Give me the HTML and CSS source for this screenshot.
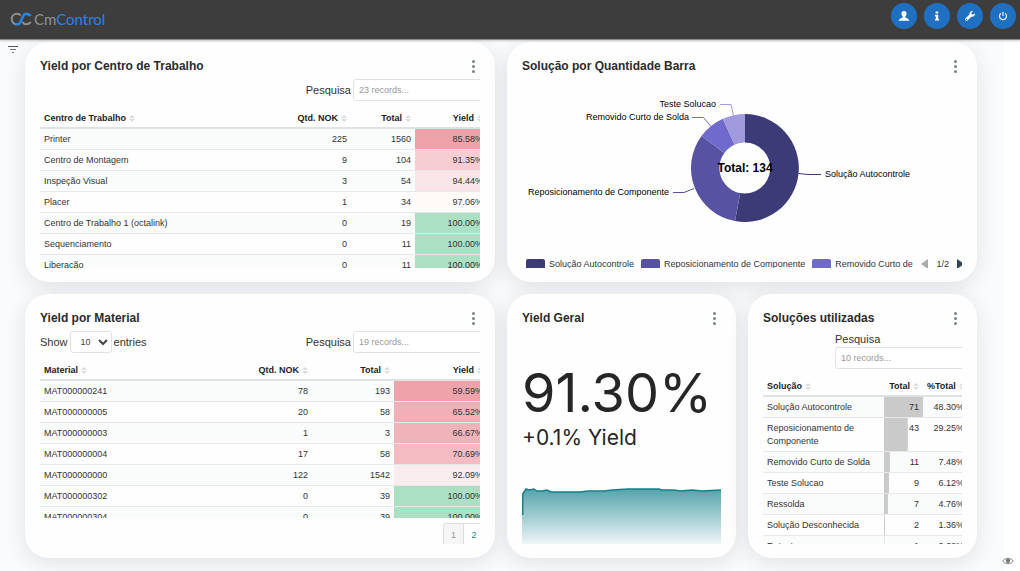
FILE: index.html
```html
<!DOCTYPE html>
<html lang="pt-BR">
<head>
  <meta charset="UTF-8">
  <meta name="viewport" content="width=device-width, initial-scale=1">
  <title>CmControl</title>
  <link rel="stylesheet" href="styles.css">
</head>
<body>
  <header class="topbar">
    <a class="logo" href="#" aria-label="CmControl">
      <svg width="23" height="14" viewBox="0 0 23 14" fill="none" stroke-width="2">
        <path d="M10.500 3.500C9.500 2 8.300 1.700 7 1.700C4 1.700 1.700 4 1.700 7S4 12.300 6.500 12.300" stroke="#8f8f8f"/>
        <path d="M5 12.300H8C12 12.300 11.500 1.700 16 1.700C18 1.700 19.500 2.500 20.500 4" stroke="#2b84e0" stroke-width="2.600"/>
        <path d="M12.500 10C13.500 11.700 14.700 12.300 16 12.300C18 12.300 19.500 11.500 20.800 10" stroke="#8f8f8f"/>
      </svg>
      <span class="logo-text">Cm<b>Control</b></span>
    </a>
    <nav class="actions">
      <button class="round" aria-label="Usuário">
        <svg width="12" height="12" viewBox="0 0 12 12"><path fill="#fff" d="M6 1C7.700 1 8.500 2.100 8.500 3.600C8.500 5 8 6 7.300 6.500V7.600C8.500 8.300 11 8.700 11.300 10.800H.7C1 8.700 3.500 8.300 4.700 7.600V6.500C4 6 3.500 5 3.500 3.600C3.500 2.100 4.300 1 6 1Z"/></svg>
      </button>
      <button class="round" aria-label="Informações">
        <svg width="12" height="12" viewBox="0 0 12 12"><path fill="#fff" d="M4.600 1.500h2.600v2H4.600zM3.900 4.800h3.300v4.400h1v1.400H3.900V9.200h.9V6.200h-.9z"/></svg>
      </button>
      <button class="round" aria-label="Configurações">
        <svg width="12" height="12" viewBox="0 0 12 12"><path fill="#fff" d="M10.900 3.300L9 4.700L7.500 3.900L7.400 2.400L9.300 1.200C7.400.5 5.200 1.900 5.500 4.600L1.400 8.500C.4 9.600 2.200 11.600 3.500 10.600L7.300 6.800C9.800 7.100 11.500 5.200 10.900 3.300ZM2.500 10.100a.7.700 0 1 1 .1-1.400a.7.700 0 0 1-.1 1.400Z"/></svg>
      </button>
      <button class="round" aria-label="Sair">
        <svg width="12" height="12" viewBox="0 0 12 12" fill="none" stroke="#dbe9f7" stroke-width="1.300"><path d="M3.900 3.300A3.500 3.500 0 1 0 8.100 3.300M6 1.700V6"/></svg>
      </button>
    </nav>
  </header>

  <main class="page">
    <button class="filter" aria-label="Filtros">
      <svg width="12" height="10" viewBox="0 0 12 10" stroke="#777" fill="none"><path d="M1 1.500H11" stroke="#555"/><path d="M3 4.500H9M5 7.500H7"/></svg>
    </button>

    <div class="grid">
      <section class="card wide">
        <div class="card-head">
          <h2>Yield por Centro de Trabalho</h2>
          <button class="kebab" aria-label="Menu"><i></i><i></i><i></i></button>
        </div>
        <div class="card-body">
          <div class="controls">
            <label class="search">Pesquisa <input type="search" placeholder="23 records..."></label>
          </div>
          <div class="scroll">
            <table class="by-center">
              <colgroup><col><col class="c-nok"><col class="c-total"><col class="c-yield"></colgroup>
              <thead>
                <tr><th>Centro de Trabalho<s></s></th><th>Qtd. NOK<s></s></th><th>Total<s></s></th><th>Yield<s></s></th></tr>
              </thead>
              <tbody>
                <tr><td>Printer</td><td>225</td><td>1560</td><td style="background:#eea2aa">85.58%</td></tr>
                <tr><td>Centro de Montagem</td><td>9</td><td>104</td><td style="background:#f6cdd2">91.35%</td></tr>
                <tr><td>Inspeção Visual</td><td>3</td><td>54</td><td style="background:#f9e4e7">94.44%</td></tr>
                <tr><td>Placer</td><td>1</td><td>34</td><td style="background:#fdfaf7">97.06%</td></tr>
                <tr><td>Centro de Trabalho 1 (octalink)</td><td>0</td><td>19</td><td style="background:#abe0c5">100.00%</td></tr>
                <tr><td>Sequenciamento</td><td>0</td><td>11</td><td style="background:#abe0c5">100.00%</td></tr>
                <tr><td>Liberação</td><td>0</td><td>11</td><td style="background:#abe0c5">100.00%</td></tr>
              </tbody>
            </table>
          </div>
        </div>
      </section>

      <section class="card wide">
        <div class="card-head">
          <h2>Solução por Quantidade Barra</h2>
          <button class="kebab" aria-label="Menu"><i></i><i></i><i></i></button>
        </div>
        <div class="card-body">
          <svg class="donut" viewBox="0 0 440 180">
            <path fill="#3c3a77" d="M223 39A54 54 0 1 1 213 146.100L218.300 118.100A25.500 25.500 0 1 0 223 67.500Z"/>
            <path fill="#5752a2" d="M213 146.100A54 54 0 0 1 179.500 61L202.400 77.900A25.500 25.500 0 0 0 218.300 118.100Z"/>
            <path fill="#716acd" d="M179.500 61A54 54 0 0 1 200.900 43.700L212.500 69.700A25.500 25.500 0 0 0 202.400 77.900Z"/>
            <path fill="#9f9bdc" d="M200.900 43.700A54 54 0 0 1 223 39V67.500A25.500 25.500 0 0 0 212.500 69.700Z"/>
            <g fill="none">
              <path stroke="#9f9bdc" d="M198 29.500H209L211.500 40.500"/>
              <path stroke="#716acd" d="M170 42.500H181.500L189 51.500"/>
              <path stroke="#5752a2" d="M151 117.500H162L172 113.500"/>
              <path stroke="#3c3a77" d="M276.500 98.500L286 99.500H299"/>
            </g>
            <text x="194" y="32" text-anchor="end">Teste Solucao</text>
            <text x="167" y="45" text-anchor="end">Removido Curto de Solda</text>
            <text x="147" y="120" text-anchor="end">Reposicionamento de Componente</text>
            <text x="303" y="102">Solução Autocontrole</text>
            <text class="donut-total" x="223" y="97" text-anchor="middle">Total: 134</text>
          </svg>
          <div class="legend">
            <ul>
              <li><i class="l1"></i>Solução Autocontrole</li>
              <li><i class="l2"></i>Reposicionamento de Componente</li>
              <li><i class="l3"></i>Removido Curto de</li>
            </ul>
            <div class="legend-pager">
              <button class="prev" aria-label="Anterior"></button>
              <span>1/2</span>
              <button class="next" aria-label="Próximo"></button>
            </div>
          </div>
        </div>
      </section>

      <section class="card wide">
        <div class="card-head">
          <h2>Yield por Material</h2>
          <button class="kebab" aria-label="Menu"><i></i><i></i><i></i></button>
        </div>
        <div class="card-body">
          <div class="controls">
            <label class="show">Show <select><option>10</option><option>25</option><option>50</option></select> entries</label>
            <label class="search">Pesquisa <input type="search" placeholder="19 records..."></label>
          </div>
          <div class="scroll">
            <table class="by-material">
              <colgroup><col><col class="c-nok"><col class="c-total"><col class="c-yield"></colgroup>
              <thead>
                <tr><th>Material<s></s></th><th>Qtd. NOK<s></s></th><th>Total<s></s></th><th>Yield<s></s></th></tr>
              </thead>
              <tbody>
                <tr><td>MAT000000241</td><td>78</td><td>193</td><td style="background:#eea2aa">59.59%</td></tr>
                <tr><td>MAT000000005</td><td>20</td><td>58</td><td style="background:#f1b0b7">65.52%</td></tr>
                <tr><td>MAT000000003</td><td>1</td><td>3</td><td style="background:#f1b3ba">66.67%</td></tr>
                <tr><td>MAT000000004</td><td>17</td><td>58</td><td style="background:#f4bcc2">70.69%</td></tr>
                <tr><td>MAT000000000</td><td>122</td><td>1542</td><td style="background:#f9ecee">92.09%</td></tr>
                <tr><td>MAT000000302</td><td>0</td><td>39</td><td style="background:#abe0c5">100.00%</td></tr>
                <tr><td>MAT000000304</td><td>0</td><td>39</td><td style="background:#abe0c5">100.00%</td></tr>
              </tbody>
            </table>
          </div>
          <div class="pages">
            <button disabled>1</button><button>2</button>
          </div>
        </div>
      </section>

      <section class="card">
        <div class="card-head">
          <h2>Yield Geral</h2>
          <button class="kebab" aria-label="Menu"><i></i><i></i><i></i></button>
        </div>
        <div class="card-body kpi">
          <p class="kpi-value">91.30%</p>
          <p class="kpi-delta">+0.1% Yield</p>
          <svg class="area" viewBox="0 0 199 57" preserveAspectRatio="none">
            <defs>
              <linearGradient id="fade" x1="0" y1="0" x2="0" y2="1">
                <stop offset="0" stop-color="#55a3ab"/>
                <stop offset="1" stop-color="#eef6f7"/>
              </linearGradient>
            </defs>
            <path fill="url(#fade)" d="M0 57V7L2 5L4 2L7 3L12 2L15 4L20 4L25 3L29 5H58L66 4H82L90 3L106 2H137L140 3H152L158 4L170 3L180 4L199 3V57Z"/>
            <path fill="none" stroke="#15808b" stroke-width="1.500" d="M.7 28V7L2 5L4 2L7 3L12 2L15 4L20 4L25 3L29 5H58L66 4H82L90 3L106 2H137L140 3H152L158 4L170 3L180 4L199 3"/>
          </svg>
        </div>
      </section>

      <section class="card">
        <div class="card-head">
          <h2>Soluções utilizadas</h2>
          <button class="kebab" aria-label="Menu"><i></i><i></i><i></i></button>
        </div>
        <div class="card-body">
          <div class="controls">
            <label class="search stacked">Pesquisa <input type="search" placeholder="10 records..."></label>
          </div>
          <div class="scroll">
            <table class="by-solution">
              <colgroup><col><col class="c-total"><col class="c-pct"></colgroup>
              <thead>
                <tr><th>Solução<s></s></th><th>Total<s></s></th><th>%Total<s></s></th></tr>
              </thead>
              <tbody>
                <tr><td>Solução Autocontrole</td><td class="bar" style="--w:100%">71</td><td>48.30%</td></tr>
                <tr><td>Reposicionamento de Componente</td><td class="bar" style="--w:61%">43</td><td>29.25%</td></tr>
                <tr><td>Removido Curto de Solda</td><td class="bar" style="--w:15%">11</td><td>7.48%</td></tr>
                <tr><td>Teste Solucao</td><td class="bar" style="--w:13%">9</td><td>6.12%</td></tr>
                <tr><td>Ressolda</td><td class="bar" style="--w:10%">7</td><td>4.76%</td></tr>
                <tr><td>Solução Desconhecida</td><td class="bar" style="--w:3%">2</td><td>1.36%</td></tr>
                <tr><td>Retest</td><td class="bar" style="--w:1%">1</td><td>0.68%</td></tr>
              </tbody>
            </table>
          </div>
        </div>
      </section>
    </div>
  </main>

  <button class="eye" aria-label="Mostrar">
    <svg width="12" height="8" viewBox="0 0 12 8"><path d="M.7 4C3 .4 9 .4 11.300 4C9 7.600 3 7.600 .7 4Z" fill="none" stroke="#888"/><circle cx="6" cy="3.700" r="2.200" fill="#777"/></svg>
  </button>
</body>
</html>
```
FILE: styles.css
```css
* { box-sizing: border-box; }
body {
  margin: 0;
  font-family: "Liberation Sans", Arial, sans-serif;
  font-size: 9px;
  line-height: 13px;
  color: #333;
  background: #fff;
  overflow: hidden;
}
button {
  padding: 0;
  border: 0;
  background: none;
  font: inherit;
  cursor: pointer;
}
h2, p, ul {
  margin: 0;
  padding: 0;
}

/* top bar */
.topbar {
  position: relative;
  display: flex;
  justify-content: space-between;
  align-items: flex-start;
  height: 40px;
  padding: 3px 4px 0 10px;
  background: #3d3d3d;
  border-bottom: 1px solid #8a8a8a;
  box-shadow: 0 1px 2px rgba(0, 0, 0, .2);
}
.logo {
  display: flex;
  align-items: center;
  gap: 1px;
  height: 31px;
  text-decoration: none;
}
.logo-text {
  font-family: Lato, sans-serif;
  font-size: 15px;
  line-height: 20px;
  color: #909090;
}
.logo-text b {
  font-weight: 400;
  color: #2b84e0;
}
.actions {
  display: flex;
  gap: 7px;
}
.round {
  display: flex;
  align-items: center;
  justify-content: center;
  width: 26px;
  height: 26px;
  border-radius: 50%;
  background: #1f70c1;
}

/* dashboard */
.page {
  display: flex;
  align-items: flex-start;
  min-height: calc(100vh - 40px);
  margin-right: 16px;
  padding: 2px 27px 13px 0;
  background: #fafbfd;
}
.filter {
  width: 25px;
  height: 16px;
  line-height: 0;
}
.grid {
  flex: 1;
  display: grid;
  grid-template-columns: repeat(4, minmax(0, 1fr));
  grid-template-rows: 240px 264px;
  gap: 12px;
}
.card {
  display: flex;
  flex-direction: column;
  min-width: 0;
  padding: 15px 15px 14px;
  border-radius: 24px;
  background: #fefefe;
  box-shadow: 0 5px 22px rgba(40, 42, 46, .12);
}
.wide { grid-column: span 2; }
.card-head {
  display: flex;
  justify-content: space-between;
  align-items: center;
}
.card-head h2 {
  font-size: 12px;
  line-height: 18px;
  color: #2b2b2b;
}
.kebab {
  display: flex;
  flex-direction: column;
  align-items: center;
  gap: 2px;
  width: 13px;
}
.kebab i {
  width: 3px;
  height: 3px;
  border-radius: 50%;
  background: #75838c;
}
.card-body {
  flex: 1;
  display: flex;
  flex-direction: column;
  min-height: 0;
  overflow: hidden;
}

/* search and page size */
.controls {
  display: flex;
  width: calc(100% + 7px);
  margin: 4px 0 6px;
  font-size: 11px;
  line-height: 16px;
}
.search, .show {
  display: flex;
  align-items: center;
  gap: 2px;
}
.search { margin-left: auto; }
.search.stacked {
  flex-direction: column;
  align-items: flex-start;
  gap: 0;
}
.search input, .show select {
  height: 22px;
  border: 1px solid #e2e2e2;
  border-radius: 3px;
  background: #fff;
  font: 9px "Liberation Sans", Arial, sans-serif;
  color: #444;
}
.search input {
  width: 134px;
  padding: 0 5px;
}
.search input::placeholder { color: #999; }
.show select {
  width: 42px;
  padding-left: 6px;
}

/* tables */
.scroll {
  flex: 1;
  min-height: 0;
  overflow: hidden;
}
table {
  width: calc(100% + 7px);
  table-layout: fixed;
  border-collapse: separate;
  border-spacing: 0;
}
th {
  padding: 5px 4px 2px;
  border-bottom: 2px solid #dfe2e3;
  text-align: right;
  white-space: nowrap;
  color: #222;
}
td {
  padding: 4px 4px 3px;
  border-bottom: 1px solid #e6e8e9;
  text-align: right;
  vertical-align: top;
}
th:first-child, td:first-child { text-align: left; }
tbody tr:nth-child(odd) { background: #fafcfb; }
.by-center .c-nok { width: 93px; }
.by-center .c-total { width: 64px; }
.by-center .c-yield { width: 72px; }
.by-material .c-nok { width: 120px; }
.by-material .c-total { width: 82px; }
.by-material .c-yield { width: 93px; }
.by-solution { width: calc(100% + 6px); }
.by-solution .c-total { width: 39px; }
.by-solution .c-pct { width: 45px; }
.bar {
  background: linear-gradient(#cacaca, #cacaca) no-repeat left / var(--w) 100%;
}

/* sort arrows */
th s {
  display: inline-block;
  width: 6px;
  height: 7px;
  margin-left: 3px;
  vertical-align: -1px;
}
th s::before, th s::after {
  content: "";
  display: block;
  border: solid transparent;
  border-width: 0 3px 3px;
  border-bottom-color: #dcdcdc;
}
th s::after {
  margin-top: 1px;
  border-width: 3px 3px 0;
  border-top-color: #dcdcdc;
}

.pages {
  display: flex;
  flex-shrink: 0;
  justify-content: flex-end;
  width: calc(100% + 5px);
  height: 21px;
  margin-top: 5px;
}
.pages button {
  width: 21px;
  height: 24px;
  border: 1px solid #dedede;
  color: #24889a;
}
.pages button:first-child {
  border-radius: 3px 0 0 3px;
  background: #f5f5f5;
  color: #999;
}
.pages button + button { border-left: 0; }

/* donut */
.donut {
  flex-shrink: 0;
  width: 100%;
  height: 180px;
}
.donut text { fill: #000; }
.donut .donut-total {
  font-size: 12px;
  font-weight: bold;
}
.legend {
  display: flex;
  flex-shrink: 0;
  align-items: center;
  height: 18px;
  padding-left: 4px;
  white-space: nowrap;
}
.legend ul {
  flex: 1;
  display: flex;
  gap: 7px;
  list-style: none;
}
.legend li {
  display: flex;
  align-items: center;
  gap: 4px;
}
.legend i {
  width: 19px;
  height: 11px;
  border-radius: 2px;
}
.l1 { background: #3c3a77; }
.l2 { background: #5752a2; }
.l3 { background: #716acd; }
.legend-pager {
  display: flex;
  align-items: center;
  gap: 8px;
  margin-right: -2px;
}
.prev, .next {
  border: solid transparent;
  border-width: 5px 0;
}
.prev { border-right: 7px solid #aaa; }
.next { border-left: 7px solid #2f4554; }

/* yield indicator */
.kpi {
  font-family: Inter, sans-serif;
  color: #262626;
}
.kpi-value {
  margin-top: 33px;
  font-size: 54px;
  line-height: 66px;
}
.kpi-delta {
  font-size: 21px;
  line-height: 24px;
}
.area {
  width: 100%;
  height: 57px;
  margin-top: auto;
}

.eye {
  position: fixed;
  right: 6px;
  bottom: 6px;
  line-height: 0;
}
```
